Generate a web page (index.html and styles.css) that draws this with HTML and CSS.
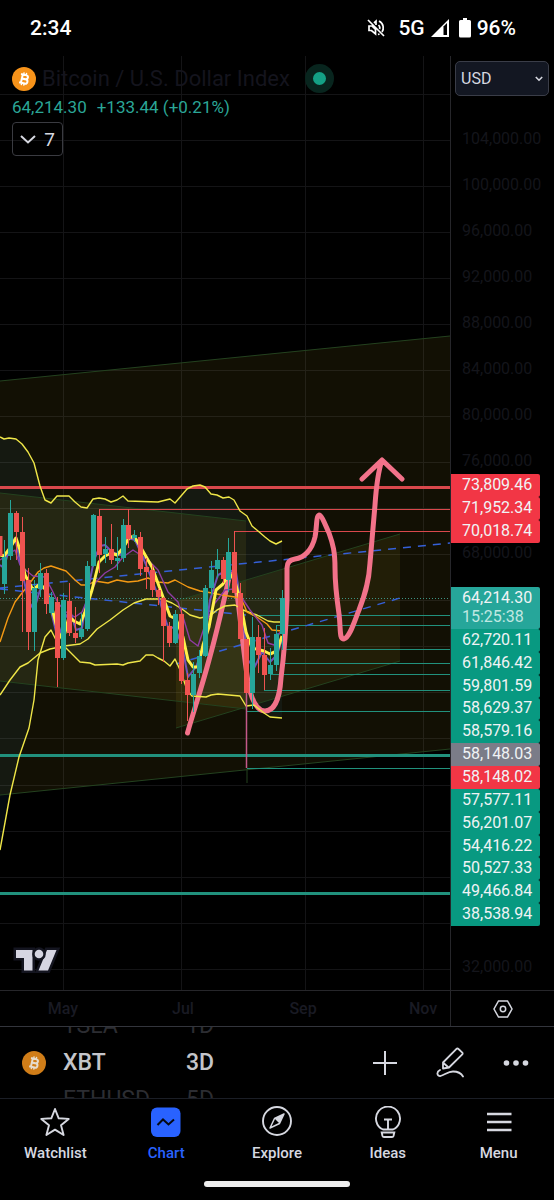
FILE: index.html
```html
<!DOCTYPE html>
<html lang="en">
<head>
<meta charset="utf-8">
<meta name="viewport" content="width=device-width, initial-scale=1">
<title>Bitcoin / U.S. Dollar Index</title>
<link rel="stylesheet" href="styles.css">
</head>
<body>
<div class="app">
  <header class="status">
    <span class="clock">2:34</span>
    <span class="indicators">
      <svg class="mute" width="20" height="20" viewBox="0 0 20 20" fill="none" stroke="#fff" stroke-width="1.7" aria-hidden="true"><path d="M2 2L18 18M3 8H6L9.500 11.500V16L5.500 12.500H3ZM8 5L10 3.200V7M13 3C18 5.500 18 11 16 14M12.500 7C14 8.500 14 10 13.500 11M12 16.500L13.500 16"/></svg>
      <span>5G</span>
      <svg class="signal" width="20" height="20" viewBox="0 0 20 20" aria-hidden="true"><path d="M1 19L19 1V19Z" fill="#fff"/><path d="M13.500 8.500L17 5V17H13.500Z" fill="#000"/></svg>
      <svg class="battery" width="12" height="20" viewBox="0 0 12 20" aria-hidden="true"><path d="M4 0H8V2H10.500Q12 2 12 3.500V18Q12 19.500 10.500 19.500H1.500Q0 19.500 0 18V3.500Q0 2 1.500 2H4Z" fill="#fff"/></svg>
      <span>96%</span>
    </span>
  </header>

  <main class="chart">
    <section class="plot">
      <svg class="canvas" viewBox="0 56 450 934" role="img" aria-label="Price chart">
        <g class="grid">
          <path d="M63.500 56V990M181.500 56V990M305.500 56V990M423.500 56V990"/>
          <path d="M0 94.500H450M0 140.500H450M0 186.500H450M0 232.500H450M0 278.500H450M0 324.500H450M0 370.500H450M0 416.500H450M0 462.500H450M0 508.500H450M0 554.500H450M0 600.500H450M0 646.500H450M0 692.500H450M0 738.500H450M0 785.500H450M0 831.500H450M0 877.500H450M0 923.500H450M0 969.500H450"/>
        </g>
        <path class="band" d="M0 437L4 439 9 438 16 439 22 444 28 452 34 463 40 486 45 500 51 503 57 496 69 496 75 502 81 507 87 508 93 499 99 498 105 499 111 502 117 500 123 496 128 501 158 502 170 499 175 503 181 496 187 489 193 486 200 485 205 487 211 494 217 495 223 498 229 497 234 500 240 511 247 516 252 526 258 531 265 537 270 541 276 544 282 541V718L270 717 258 708 252 706 246 706 240 697 235 694H211L206 697H200L187 692 181 672 175 659 170 666 158 658 146 655 140 661 123 665H95L80 662 70 652 60 648 51 630 45 637 38 660 34 700 29 728 19 757 10 795 0 850Z"/>
        <g class="channels">
          <path d="M0 381L450 336V749L0 795Z"/>
          <path d="M0 493L246 521V709L0 681Z"/>
          <path d="M176 601L400 534V661L176 728Z"/>
        </g>
        <path class="channel-line" d="M0 381L450 336M0 795L450 749M0 493L246 521M0 681L246 709M176 601L400 534M176 728L400 661M247 768V783"/>
        <path class="close-line" d="M0 598.500H450"/>
        <g class="levels up">
          <path d="M252 615.500H450M276 625.500H450M282 649.500H450M282 663.500H450M270 674.500H450M264 690.500H450M247 711.500H450M247 768.500H450"/>
          <path class="strong" d="M0 755.500H450M0 893.500H450"/>
        </g>
        <g class="levels down">
          <path d="M99 509.500H450M234 531.500H450"/>
          <path class="strong" d="M0 487.500H450"/>
        </g>
        <path class="trend" d="M0 588L450 543M0 589L246 615M176 664L400 598"/>
        <path class="sketch" d="M187.500 733C192 716 201 690 209 660C217 632 224 600 229 578Q232 570 235 580C239 602 243 650 248 682C251 698 256 711 265 711C276 711 280 694 281 678C284 655 286 630 287 600V568Q287 560 295 559C304 558 312 550 315 537C317 527 316 516 319 515C322 515 326 527 329 533C333 544 335 552 335 568C335 585 337 600 339 614C341 630 339 639 344 639C350 637 354 622 359 610C364 597 369 583 370 563C372 540 374 518 375 505C376 490 378 472 382 460M362 479L382 460L402 479"/>
        <path class="ma slow" d="M0 695L10 680 20 667 28 663 40 653 50 649 64 646 80 644 88 639 97 629 110 620 123 610 134 603 146 599 162 599 172 603 182 609 190 615 200 618 210 616 217 610 225 606 235 605 243 610 257 615 268 621 274 622 282 622"/>
        <path class="ma upper" d="M0 437L4 439 9 438 16 439 22 444 28 452 34 463 40 486 45 500 51 503 57 496 69 496 75 502 81 507 87 508 93 499 99 498 105 499 111 502 117 500 123 496 128 501 158 502 170 499 175 503 181 496 187 489 193 486 200 485 205 487 211 494 217 495 223 498 229 497 234 500 240 511 247 516 252 526 258 531 265 537 270 541 276 544 282 541"/>
        <path class="ma lower" d="M0 850L10 795 19 757 29 728 34 700 38 660 45 637 51 630 54 636 60 648 64 646 70 652 80 662 90 663 95 665 117 664 123 665 128 663 140 661 146 655 153 655 158 658 164 661 170 666 175 659 181 672 187 690 192 696 206 697 211 695 218 694 240 696 246 706 254 705 264 713 270 717 282 718"/>
        <path class="ma orange" d="M0 642L8 618 15 602 22 593 30 583 38 572 44 568 51 566 57 568 66 571 75 580 81 585 88 585 95 581 108 583 117 580 128 582 138 581 148 578 158 582 168 583 175 580 188 587 200 591 212 593 222 595 235 597 241 598 247 612 257 617 267 624 272 630 282 631"/>
        <path class="ma purple" d="M0 560L10 553 15 550 20 565 28 572 33 576 45 577 52 590 58 603 66 612 75 617 82 612 88 598 96 582 105 573 115 567 123 557 133 550 142 556 150 562 158 570 168 592 178 602 184 620 190 640 198 646 205 625 215 603 225 590 234 589 240 595 250 610 262 625 268 643 274 645 280 632"/>
        <path class="ma violet" d="M0 565L4 568 10 545 15 538 22 570 28 600 34 610 40 590 46 585 52 615 58 640 64 620 70 610 76 630 82 628 88 590 94 560 100 546 105 545 112 552 120 555 128 538 135 540 142 555 150 575 158 595 163 612 168 627 175 628 182 645 188 677 196 667 203 650 210 600 218 575 228 570 236 572 243 620 248 660 254 668 262 652 270 662 277 655 282 640"/>
        <path class="ma fast" d="M0 555L4 556 10 548 16 538 20 550 25 575 33 590 40 584 46 590 52 608 58 632 63 640 69 617 74 621 80 624 85 612 92 590 99 562 105 556 111 553 117 555 123 548 129 538 134 536 140 546 152 567 163 597 170 616 176 619 183 637 188 660 193 667 198 667 203 645 209 627 216 590 223 584 229 574 234 578 240 600 246 632 252 648 264 651 270 654 277 651 282 636"/>
        <g class="candles rise">
          <path class="wick" d="M4.500 540V594M10.500 500V560M34.500 580V651M40.500 563V597M51.500 592V615M63.500 593V660M81.500 613V639M87.500 561V631M93.500 514V567M105.500 537V563M117.500 537V570M123.500 519V562M134.500 530V542M175.500 610V644M193.500 662V712M199.500 650V678M205.500 585V657M211.500 561V595M217.500 549V578M228.500 538V592M252.500 617V709M270.500 648V680M276.500 625V671M282.500 590V650"/>
          <path class="body" d="M4.500 557V584M10.500 513V556M34.500 588V632M40.500 573V589M51.500 597V613M63.500 600V658M81.500 629V637M87.500 566V629M93.500 515V566M105.500 549V554M117.500 558V561M123.500 525V558M134.500 535V538M175.500 614V643M193.500 674V695M199.500 656V673M205.500 588V656M211.500 570V588M217.500 560V569M228.500 552V580M252.500 637V693M270.500 665V674M276.500 634V665M282.500 598V634"/>
        </g>
        <g class="candles fall">
          <path class="wick" d="M16.500 511V560M22.500 517V632M28.500 568V650M46.500 569V614M57.500 597V687M69.500 583V636M75.500 607V643M99.500 509V573M111.500 524V564M128.500 509V548M140.500 532V576M146.500 558V589M152.500 565V597M158.500 588V605M163.500 597V662M169.500 622V647M181.500 608V684M187.500 673V721M223.500 557V583M234.500 531V593M240.500 583V640M258.500 625V673M264.500 628V690"/>
          <path class="spike" d="M246.500 693V768"/>
          <path class="body" d="M0 536V556M16.500 513V532M22.500 532V581M28.500 580V632M46.500 573V604M57.500 602V658M69.500 601V633M75.500 633V638M99.500 516V555M111.500 549V560M128.500 525V539M140.500 537V569M146.500 567V572M152.500 570V590M158.500 590V597M163.500 598V626M169.500 626V643M181.500 614V681M187.500 680V695M223.500 560V579M234.500 552V593M240.500 593V639M246.500 639V693M258.500 637V655M264.500 655V675"/>
        </g>
        <g class="mark">
          <path d="M16 950H32.500V970.500H24V958H16ZM47 950H56.500L48 970.500H38.500Z"/>
          <circle cx="39" cy="954" r="4.300"/>
        </g>
      </svg>
      <div class="legend">
        <h1 class="symbol">
          <svg width="24" height="24" viewBox="0 0 24 24" aria-hidden="true"><circle cx="12" cy="12" r="12" fill="#f7931a"/><g transform="rotate(13 12 12)" fill="none" stroke="#fff" stroke-width="2"><path d="M8 7.800H13Q15.500 7.800 15.500 9.900T13 12H9.800M9.800 12H13.500Q16 12 16 14.200T13.500 16.300H8M9.800 8V16"/><path stroke-width="1.400" d="M10.700 5.500V8M13.200 5.500V8M10.700 16V18.600M13.200 16V18.600"/></g></svg>
          <span>Bitcoin / U.S. Dollar Index</span>
          <i class="live"></i>
        </h1>
        <p class="quote"><span>64,214.30</span><span>+133.44 (+0.21%)</span></p>
        <button class="indicators-toggle" type="button" aria-label="Show 7 indicators">
          <svg width="16" height="9" viewBox="0 0 16 9" fill="none" stroke="#d6d8e0" stroke-width="2" aria-hidden="true"><path d="M1 1L8 7.500L15 1"/></svg>7
        </button>
      </div>
    </section>

    <aside class="price-axis">
      <div class="currency">
        <select aria-label="Currency"><option>USD</option></select>
        <svg width="8" height="6" viewBox="0 0 8 6" fill="none" stroke="#d6d8e0" stroke-width="1.600" aria-hidden="true"><path d="M.8 1L4 4.200L7.200 1"/></svg>
      </div>
      <ol class="scale">
        <li>104,000.00</li><li>100,000.00</li><li>96,000.00</li><li>92,000.00</li><li>88,000.00</li><li>84,000.00</li><li>80,000.00</li><li>76,000.00</li><li></li><li>68,000.00</li><li></li><li></li><li></li><li></li><li></li><li></li><li></li><li></li><li>32,000.00</li>
      </ol>
      <div class="tags">
        <ul class="tag-group short">
          <li class="red">73,809.46</li><li class="red">71,952.34</li><li class="red">70,018.74</li>
        </ul>
        <p class="last">64,214.30<time>15:25:38</time></p>
        <ul class="tag-group long">
          <li>62,720.11</li><li>61,846.42</li><li>59,801.59</li><li>58,629.37</li><li>58,579.16</li><li class="gray">58,148.03</li><li class="red">58,148.02</li><li>57,577.11</li><li>56,201.07</li><li>54,416.22</li><li>50,527.33</li><li>49,466.84</li><li>38,538.94</li>
        </ul>
      </div>
    </aside>

    <div class="time-axis">
      <span>May</span><span>Jul</span><span>Sep</span><span>Nov</span>
    </div>
    <button class="axis-settings" type="button" aria-label="Axis settings">
      <svg width="20" height="18" viewBox="0 0 20 18" fill="none" stroke="#d6d8e0" stroke-width="1.500" aria-hidden="true"><path d="M5.500 1H14.500L19 9L14.500 17H5.500L1 9Z"/><circle cx="10" cy="9" r="2.700"/></svg>
    </button>
  </main>

  <section class="toolbar">
    <svg class="coin" width="24" height="24" viewBox="0 0 24 24" aria-hidden="true"><circle cx="12" cy="12" r="12" fill="#d07d18"/><g transform="rotate(13 12 12)" fill="none" stroke="#e6dccd" stroke-width="2"><path d="M8 7.800H13Q15.500 7.800 15.500 9.900T13 12H9.800M9.800 12H13.500Q16 12 16 14.200T13.500 16.300H8M9.800 8V16"/><path stroke-width="1.400" d="M10.700 5.500V8M13.200 5.500V8M10.700 16V18.600M13.200 16V18.600"/></g></svg>
    <div class="wheel symbols"><span>TSLA</span><strong>XBT</strong><span>ETHUSD</span></div>
    <div class="wheel intervals"><span>1D</span><strong>3D</strong><span>5D</span></div>
    <div class="tools">
      <button type="button" aria-label="Add"><svg width="24" height="24" viewBox="0 0 24 24" fill="none" stroke="#d6d8e0" stroke-width="2"><path d="M12 0V24M0 12H24"/></svg></button>
      <button type="button" aria-label="Draw"><svg width="28" height="31" viewBox="0 0 28 31" fill="none" stroke="#d6d8e0" stroke-width="1.800" stroke-linejoin="round" stroke-linecap="round"><path d="M7 15.500L20.500 1.800Q21.500 1 22.500 2L26.300 5.600Q27 6.500 26.300 7.400L13 20.500L7 21.500ZM7.500 16L12.500 20.500"/><path d="M4 23C0 25 1 29.500 4.500 29C8.500 28 12 24.500 17 24.500C22 24.500 25 26 27 29.500"/></svg></button>
      <button type="button" aria-label="More"><svg width="26" height="6" viewBox="0 0 26 6" fill="#d6d8e0"><circle cx="3.500" cy="3" r="2.800"/><circle cx="13" cy="3" r="2.800"/><circle cx="22.500" cy="3" r="2.800"/></svg></button>
    </div>
  </section>

  <nav class="tabs">
    <a href="#watchlist"><svg width="32" height="32" viewBox="0 0 32 32" fill="none" stroke="#d6d8e0" stroke-width="1.900" stroke-linejoin="round"><path d="M16 3L19.700 12.300L29.700 12.900L22 19.300L24.600 29L16 23.600L7.400 29L10 19.300L2.300 12.900L12.300 12.300Z"/></svg>Watchlist</a>
    <a class="active" href="#chart"><svg width="32" height="32" viewBox="0 0 32 32"><rect x="1" y="1.500" width="29.500" height="29.500" rx="6" fill="#2962ff"/><path d="M7.500 19L13 13.500L18.500 18.500L24 13.500" fill="none" stroke="#050914" stroke-width="2"/></svg>Chart</a>
    <a href="#explore"><svg width="32" height="32" viewBox="0 0 32 32" fill="none" stroke="#d6d8e0" stroke-width="1.900"><circle cx="16" cy="15" r="14"/><path d="M23 8L13.500 12.500L9 22L18.500 17.500Z" stroke-linejoin="round" stroke-width="1.500"/><path d="M23 8L18.500 17.500L13.500 12.500Z" fill="#d6d8e0" stroke="none"/></svg>Explore</a>
    <a href="#ideas"><svg width="32" height="32" viewBox="0 0 32 32" fill="none" stroke="#d6d8e0" stroke-width="1.900"><path d="M11 23.500A12 12 0 1 1 21 23.500ZM12 13.500H20M16 13.500V23.500M9.700 26.500H22.300L21.500 30Q21.200 31 20 31H12Q10.800 31 10.500 30Z"/></svg>Ideas</a>
    <a href="#menu"><svg width="32" height="32" viewBox="0 0 32 32" stroke="#d6d8e0" stroke-width="2.300"><path d="M4 8H28.500M4 16H28.500M4 24H28.500"/></svg>Menu</a>
  </nav>
  <div class="home"></div>
</div>
</body>
</html>
```
FILE: styles.css
```css
* { box-sizing: border-box; }
body {
  margin: 0;
  background: #000;
  color: #d6d8e0;
  font-family: Roboto, "Liberation Sans", sans-serif;
  font-size: 16px;
}
button, select { font: inherit; color: inherit; }
button { padding: 0; border: 0; background: none; }
svg { display: block; flex: none; }
ol, ul, p, h1 { margin: 0; padding: 0; list-style: none; }

.status {
  display: flex;
  align-items: center;
  justify-content: space-between;
  height: 56px;
  padding: 0 38px 0 30px;
  color: #fff;
  font-size: 21px;
  font-weight: 500;
}
.indicators { display: flex; align-items: center; }
.mute { margin-right: 12px; }
.signal { margin: 0 9px 0 5px; }
.battery { margin-right: 6px; }

.chart {
  display: grid;
  grid-template-columns: minmax(0, 1fr) 104px;
  border-bottom: 1px solid #33353c;
}
.plot { position: relative; }
.canvas { width: 100%; height: auto; fill: none; }
.grid { stroke: #141416; }
.band { fill: rgba(50, 130, 190, 0.08); }
.channels { fill: rgba(255, 225, 50, 0.07); }
.channel-line { stroke: #24421f; }
.close-line { stroke: #3e9484; stroke-dasharray: 1 2; }
.levels.up { stroke: #21917d; }
.levels.down { stroke: #d9484c; }
.levels .strong { stroke-width: 3; }
.trend { stroke: #3560d8; stroke-width: 1.500; stroke-dasharray: 8 7; }
.sketch { stroke: #f2728a; stroke-width: 5; stroke-linecap: round; stroke-linejoin: round; }
.ma { stroke: #efe648; stroke-width: 1.400; stroke-linejoin: round; }
.ma.orange { stroke: #f49a14; }
.ma.purple { stroke: #8f3ca4; }
.ma.violet { stroke: #7053b8; stroke-width: 2; }
.ma.fast { stroke: #fff04a; stroke-width: 3; }
.rise { stroke: #26a69a; }
.fall { stroke: #ef5350; }
.body { stroke-width: 5; }
.spike { stroke: #c4598a; stroke-width: 1.500; }
.mark { fill: #d6d6e2; stroke: #141520; stroke-width: 5; paint-order: stroke; }

.legend {
  position: absolute;
  top: 8px;
  left: 12px;
  display: flex;
  flex-direction: column;
  align-items: flex-start;
}
.symbol {
  display: flex;
  align-items: center;
  gap: 6px;
  height: 29px;
  color: #14141d;
  font-size: 22px;
  font-weight: 400;
  white-space: nowrap;
}
.live {
  width: 29px;
  height: 29px;
  margin-left: 9px;
  border: 8px solid #08251e;
  border-radius: 50%;
  background: #14a085;
}
.quote {
  display: flex;
  gap: 10px;
  color: #2ba697;
  font-size: 17px;
  line-height: 29px;
  white-space: nowrap;
}
.indicators-toggle {
  display: flex;
  align-items: center;
  justify-content: center;
  gap: 8px;
  width: 51px;
  height: 34px;
  border: 1px solid #3a3b41;
  border-radius: 4px;
  font-size: 19px;
}

.price-axis { position: relative; padding: 5px 5px 0 4px; border-left: 1px solid #26262a; }
.currency { position: relative; }
.currency select {
  display: block;
  width: 100%;
  height: 35px;
  padding: 0 5px;
  border: 1px solid #3a3d48;
  border-radius: 5px;
  background: #131722;
  appearance: none;
}
.currency svg { position: absolute; right: 6px; top: 15px; }
.scale { margin-top: 20px; padding-left: 7px; color: #14151b; line-height: 46px; }
.scale li { height: 46px; }
.tags { position: absolute; top: 418px; left: 0; width: 89px; color: #f0f3f5; }
.tag-group { display: flex; flex-direction: column; }
.short { height: 69px; }
.long { height: 297px; }
.tag-group li {
  display: flex;
  flex: 1;
  align-items: center;
  padding: 0 0 2px 11px;
  border-radius: 0 2px 2px 0;
  background: #089981;
}
.tag-group .red { background: #f23645; }
.tag-group .gray { background: #7b7c88; }
.last {
  margin-top: 44px;
  padding: 1px 0 3px 11px;
  border-radius: 0 2px 2px 0;
  background: #26a69a;
  line-height: 19px;
}
.last time { display: block; color: #c0e8e2; }

.time-axis {
  display: flex;
  align-items: center;
  justify-content: space-between;
  height: 36px;
  padding: 0 7px 0 43px;
  border-top: 1px solid #26262a;
  color: #191a23;
  font-weight: 500;
}
.time-axis span { width: 40px; text-align: center; }
.axis-settings {
  display: grid;
  place-items: center;
  border-top: 1px solid #26262a;
  border-left: 1px solid #26262a;
}

.toolbar { display: flex; align-items: center; height: 72px; padding: 0 25px 0 22px; border-bottom: 1px solid #1b1e26; }
.wheel {
  display: flex;
  flex-direction: column;
  justify-content: center;
  height: 71px;
  overflow: hidden;
  color: #2c2d32;
  font-size: 23px;
  line-height: 37px;
}
.wheel strong { color: #c4c5ca; font-weight: 500; }
.symbols { width: 123px; margin-left: 17px; }
.tools { display: flex; align-items: center; gap: 39px; margin-left: auto; }

.tabs { display: grid; grid-template-columns: repeat(5, 1fr); padding-top: 7px; }
.tabs a {
  display: flex;
  flex-direction: column;
  align-items: center;
  gap: 5px;
  color: #d6d8e0;
  font-size: 15px;
  font-weight: 500;
  line-height: 20px;
  text-decoration: none;
}
.tabs .active { color: #2962ff; }
.home { width: 146px; height: 6px; margin: 18px auto 13px; border-radius: 3px; background: #eee; }
```
